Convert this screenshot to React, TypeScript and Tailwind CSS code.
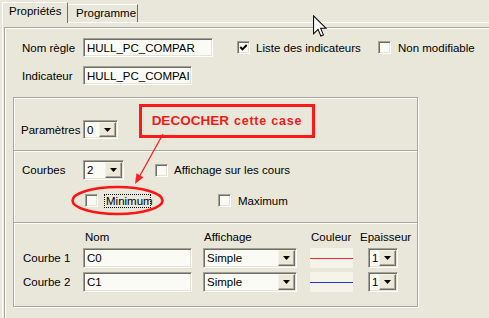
import React from "react";

const sunken =
  "border border-t-[#a3a297] border-l-[#a3a297] border-b-white border-r-white shadow-[inset_1px_1px_0_#6f6e66,inset_-1px_-1px_0_#e4e3d6] bg-[#fbfbf6]";

function Field({ className, text }: { className: string; text: string }) {
  return (
    <div className={`${sunken} ${className} box-border flex items-center pl-[3px] overflow-hidden whitespace-nowrap`}>
      {text}
    </div>
  );
}

function DropBtn() {
  return (
    <div className="w-[17px] h-full box-border bg-[#ece9d8] border border-t-[#f4f3ea] border-l-[#f4f3ea] border-b-[#6f6e66] border-r-[#6f6e66] shadow-[inset_-1px_-1px_0_#aca899] flex items-center justify-center shrink-0">
      <svg width="7" height="4" viewBox="0 0 7 4">
        <path d="M0 0H7L3.5 4Z" fill="#000" />
      </svg>
    </div>
  );
}

function Combo({ className, text }: { className: string; text: string }) {
  return (
    <div className={`${sunken} ${className} box-border flex p-[1px]`}>
      <div className="flex-1 flex items-center pl-[2px] overflow-hidden whitespace-nowrap">{text}</div>
      <DropBtn />
    </div>
  );
}

function Check({ checked }: { checked?: boolean }) {
  return (
    <div className={`${sunken} w-[13px] h-[13px] box-border flex items-center justify-center shrink-0`}>
      {checked && (
        <svg width="9" height="9" viewBox="0 0 9 9">
          <path d="M1.3 4 L3.5 6.3 L7.7 2" stroke="#000" strokeWidth="1.9" fill="none" />
        </svg>
      )}
    </div>
  );
}

function Sep() {
  return <div className="h-[2px] box-border border-t border-[#aca899] bg-white" />;
}

export default function App() {
  return (
    <div className="relative w-[489px] h-[318px] overflow-hidden bg-[#e8e7da] text-black text-[11.5px] leading-[14px] font-['Liberation_Sans',Arial,sans-serif]">
      {/* tabs */}
      <div className="flex items-end h-[22px] pl-[2px]">
        <div className="relative z-10 -mb-px h-[21px] w-[66px] box-border border-l border-t border-white border-r border-r-[#716f64] bg-[#e8e7da] pt-[1px] pl-[6px] whitespace-nowrap">
          Propriétés
        </div>
        <div className="h-[18px] w-[70px] box-border border-t border-white border-r border-r-[#716f64] pt-[1px] pl-[8px] whitespace-nowrap">
          Programme
        </div>
      </div>

      {/* tab panel */}
      <div className="ml-[2px] h-[400px] border-l border-t border-white">
        {/* group box 1 */}
        <div className="ml-[1px] mt-[4px] w-[600px] h-[400px] box-border border border-[#aca899] shadow-[inset_1px_1px_0_#fff] pt-[10px]">
          {/* row 1 */}
          <div className="flex items-center h-[19px]">
            <div className="w-[78px] pl-[17px] whitespace-nowrap">Nom règle</div>
            <Field className="w-[130px] h-[19px]" text="HULL_PC_COMPAR" />
            <div className="ml-[24px] w-[141px] flex items-center">
              <Check checked />
              <span className="ml-[6px] whitespace-nowrap">Liste des indicateurs</span>
            </div>
            <div className="flex items-center">
              <Check />
              <span className="ml-[7px] whitespace-nowrap">Non modifiable</span>
            </div>
          </div>
          {/* row 2 */}
          <div className="flex items-center h-[19px] mt-[9px]">
            <div className="w-[78px] pl-[17px] whitespace-nowrap">Indicateur</div>
            <Field className="w-[109px] h-[19px]" text="HULL_PC_COMPAI" />
          </div>

          {/* group box 2 */}
          <div className="ml-[8px] mt-[12px] w-[405px] h-[210px] box-border border border-[#aca899] shadow-[inset_1px_1px_0_#fff,1px_1px_0_#fff] flex flex-col">
            {/* section A */}
            <div className="h-[52px] pt-[22px]">
              <div className="flex items-center h-[19px]">
                <div className="w-[69px] pl-[7px] whitespace-nowrap">Paramètres</div>
                <Combo className="w-[35px] h-[19px]" text="0" />
              </div>
            </div>
            <Sep />
            {/* section B */}
            <div className="h-[70px] pt-[8px]">
              <div className="flex items-center h-[20px]">
                <div className="w-[69px] pl-[8px] whitespace-nowrap">Courbes</div>
                <Combo className="w-[41px] h-[20px]" text="2" />
                <div className="ml-[31px]">
                  <Check />
                </div>
                <span className="ml-[6px] whitespace-nowrap">Affichage sur les cours</span>
              </div>
              <div className="flex items-center h-[13px] mt-[14px] pl-[71px]">
                <div className="w-[133px] flex items-center">
                  <Check />
                  <span className="ml-[6px] w-[47px] h-[14px] box-border border border-dotted border-black pl-[1px] leading-[12px] whitespace-nowrap">
                    Minimum
                  </span>
                </div>
                <Check />
                <span className="ml-[7px] whitespace-nowrap">Maximum</span>
              </div>
            </div>
            <Sep />
            {/* section C */}
            <div className="flex flex-col">
              <div className="flex items-center h-[16px] mt-[5px]">
                <div className="w-[71px]" />
                <div className="w-[119px]">Nom</div>
                <div className="w-[107px]">Affichage</div>
                <div className="w-[49px]">Couleur</div>
                <div className="whitespace-nowrap">Epaisseur</div>
              </div>
              <div className="flex items-center h-[20px] mt-[3px]">
                <div className="w-[69px] pl-[9px] whitespace-nowrap">Courbe 1</div>
                <Field className="w-[109px] h-[20px]" text="C0" />
                <Combo className="ml-[11px] w-[94px] h-[20px]" text="Simple" />
                <div className="ml-[13px] w-[43px] h-[20px] bg-[#f5f4e8] flex items-center">
                  <div className="h-px w-full bg-[#e52b2b]" />
                </div>
                <Combo className="ml-[15px] w-[30px] h-[20px]" text="1" />
              </div>
              <div className="flex items-center h-[20px] mt-[4px]">
                <div className="w-[69px] pl-[9px] whitespace-nowrap">Courbe 2</div>
                <Field className="w-[109px] h-[20px]" text="C1" />
                <Combo className="ml-[11px] w-[94px] h-[20px]" text="Simple" />
                <div className="ml-[13px] w-[43px] h-[20px] bg-[#f5f4e8] flex items-center">
                  <div className="h-px w-full bg-[#2b2be5]" />
                </div>
                <Combo className="ml-[15px] w-[30px] h-[20px]" text="1" />
              </div>
            </div>
          </div>
        </div>
      </div>

      {/* annotation overlay */}
      <svg className="absolute left-0 top-0 pointer-events-none" width="489" height="318">
        <ellipse cx="117.5" cy="200.5" rx="45" ry="13.5" fill="none" stroke="#ff1414" strokeWidth="2.6" />
        <line x1="163" y1="134" x2="140" y2="175.5" stroke="#ff2020" strokeWidth="1.3" />
        <polygon points="135,184 143.4,177.2 136.4,173.3" fill="#ff2020" />
      </svg>
      <div className="absolute left-[139px] top-[104px] w-[176px] h-[34px] box-border border-[3px] border-[#ff1a1a] flex items-center justify-center font-bold text-[#f01c1c] whitespace-nowrap">
        <span className="text-[13.5px]">DECOCHER</span>
        <span className="ml-[5px] text-[12.5px] tracking-[0.8px]">cette case</span>
      </div>

      {/* mouse cursor */}
      <svg className="absolute left-[313px] top-[15px] pointer-events-none" width="14" height="23" viewBox="0 0 12.5 20">
        <path d="M0.5 0.5 V16.5 L4.5 12.5 L7 18.5 L9.3 17.5 L6.8 11.5 H11.5 Z" fill="#fff" stroke="#000" strokeWidth="0.9" />
      </svg>
    </div>
  );
}
